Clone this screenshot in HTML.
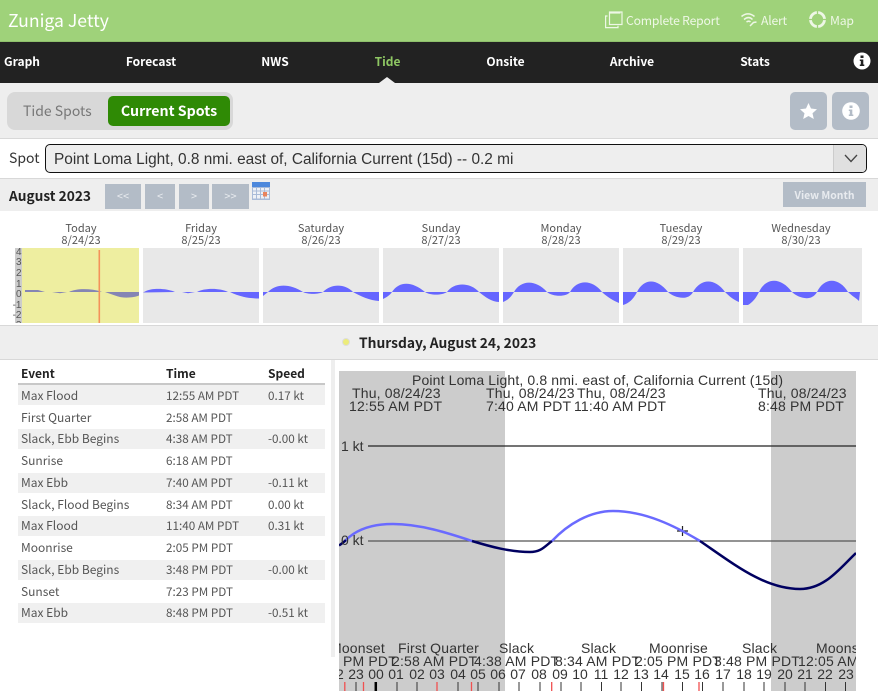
<!DOCTYPE html>
<html><head><meta charset="utf-8"><style>
html,body{margin:0;padding:0;background:#fff}
#p{position:relative;width:878px;height:693px;overflow:hidden;background:#fff;font-family:"Noto Sans CJK JP","Liberation Sans",sans-serif;color:#444}
#p div.a,#p svg{position:absolute}
.a{position:absolute;white-space:nowrap}
.n{top:52px;height:20px;line-height:20px;font-size:12px;font-weight:700;color:#fff;transform:translateX(-50%)}
.h{top:10px;height:20px;line-height:20px;font-size:12.2px;color:#eef7e6;letter-spacing:-.2px}
.b{background:#b3bcc7;color:#e8ebef;text-align:center;font-size:11px;top:184px;height:25px;line-height:25px}
.d{text-align:center;width:110px;font-size:11px;line-height:12px;color:#555;top:222px}
.t{background:#e8e8e8;top:248px;height:75px}
.r{left:18px;width:307px;height:20px}
.c{font-size:12px;line-height:22px;height:22px;color:#555}
.s{font-size:11.7px}
.th{font-size:12px;font-weight:700;line-height:20px;height:20px;color:#222;top:364px}
</style></head><body><div id="p">
<div class="a" style="left:0;top:0;width:878px;height:41px;background:#9fd27a;border-bottom:1px solid #8fc06c"></div>
<div class="a" style="left:8px;top:8px;font-size:17.6px;line-height:26px;color:#fff">Zuniga Jetty</div>
<svg style="left:604px;top:10px" width="20" height="20" viewBox="0 0 20 20" fill="none" stroke="#eef7e6" stroke-width="1.2"><rect x="5.5" y="2" width="12.5" height="12.5"/><path d="M5.5 2.6H16.5" stroke-width="2"/><path d="M3.5 6H1.6V17.6H14V15.8"/></svg>
<div class="a h" style="left:626px">Complete Report</div>
<svg style="left:740px;top:11px" width="18" height="18" viewBox="0 0 18 18" fill="none" stroke="#eef7e6" stroke-width="1.5"><path d="M1.5 5.5C5.5 2 10.5 2 14.5 5.5"/><path d="M4 8.5C7 6 10 6 12.5 8.5"/><path d="M6.5 11C8 10 9.500 10 10.500 11"/><path d="M10 15L13.500 11.500L16.500 11"/></svg>
<div class="a h" style="left:761px">Alert</div>
<svg style="left:808px;top:10px" width="19" height="19" viewBox="0 0 19 19" fill="none" stroke="#eef7e6"><circle cx="9.500" cy="9.500" r="7" stroke-width="2.800"/><path d="M9.500 1V4M9.500 15V18M1 9.500H4M15 9.500H18" stroke-width="1.300" stroke="#9fd27a"/></svg>
<div class="a h" style="left:830px">Map</div>

<div class="a" style="left:0;top:42px;width:878px;height:41px;background:#222"></div>
<div class="a n" style="left:22px">Graph</div>
<div class="a n" style="left:151px">Forecast</div>
<div class="a n" style="left:275px">NWS</div>
<div class="a n" style="left:387.500px;color:#8ec763">Tide</div>
<div class="a n" style="left:505.500px">Onsite</div>
<div class="a n" style="left:632px">Archive</div>
<div class="a n" style="left:755px">Stats</div>
<svg style="left:853px;top:52px" width="18" height="18" viewBox="0 0 18 18"><circle cx="9" cy="9" r="8.500" fill="#fff"/><path d="M7.500 3.500h3v2.500h-3zM6.800 7.500h3.500v5h1v1.500h-4.500v-1.500h1v-3.500h-1z" fill="#222"/></svg>
<svg style="left:377px;top:76px" width="20" height="7" viewBox="0 0 20 7"><path d="M2 7L10 1L18 7Z" fill="#eee"/></svg>

<div class="a" style="left:0;top:83px;width:878px;height:55px;background:#eee;border-bottom:1px solid #d8d8d8"></div>
<div class="a" style="left:7px;top:92px;width:226px;height:38px;background:#d8d8d8;border-radius:8px"></div>
<div class="a" style="left:23px;top:100px;font-size:14px;line-height:22px;color:#777">Tide Spots</div>
<div class="a" style="left:108px;top:96px;width:122px;height:30px;background:#2f8a05;border-radius:5px;color:#fff;font-weight:700;font-size:14.200px;line-height:30px;text-align:center">Current Spots</div>
<div class="a" style="left:790px;top:92px;width:37px;height:38px;background:#b3bcc7;border-radius:5px"></div>
<div class="a" style="left:832px;top:92px;width:37px;height:38px;background:#b3bcc7;border-radius:5px"></div>
<svg style="left:799px;top:102px" width="19" height="18" viewBox="0 0 19 18"><path d="M9.500 1L12 6.500L18 7.200L13.500 11.200L14.800 17L9.500 14L4.200 17L5.500 11.200L1 7.200L7 6.500Z" fill="#fff"/></svg>
<svg style="left:842px;top:102px" width="18" height="18" viewBox="0 0 18 18"><circle cx="9" cy="9" r="8.800" fill="#fff"/><path d="M7.500 3.500h3v2.500h-3zM6.800 7.500h3.500v5h1v1.500h-4.500v-1.500h1v-3.500h-1z" fill="#b3bcc7"/></svg>

<div class="a" style="left:9px;top:148px;font-size:14px;line-height:20px;color:#333">Spot</div>
<div class="a" style="left:45px;top:144px;width:820px;height:27px;background:#eee;border:1px solid #111;border-radius:5px;overflow:hidden;font-family:'Liberation Sans',sans-serif;font-size:15.400px;line-height:29px;color:#333"><span style="margin-left:8px">Point Loma Light, 0.8 nmi. east of, California Current (15d) -- 0.2 mi</span>
<div class="a" style="left:787px;top:0;width:33px;height:27px;background:#e0e0e0;border-left:1px solid #ccc"></div></div>
<svg style="left:843px;top:153px" width="16" height="11" viewBox="0 0 16 11"><path d="M2 2L8 8.500L14 2" fill="none" stroke="#444" stroke-width="1.300"/></svg>

<div class="a" style="left:0;top:178px;width:878px;height:33px;background:#eee;border-top:1px solid #d8d8d8;box-sizing:border-box"></div>
<div class="a" style="left:9px;top:185px;font-size:13.700px;font-weight:700;line-height:20px;color:#222">August 2023</div>
<div class="a b" style="left:105px;width:36px">&lt;&lt;</div>
<div class="a b" style="left:145px;width:30px">&lt;</div>
<div class="a b" style="left:179px;width:30px">&gt;</div>
<div class="a b" style="left:212px;width:37px">&gt;&gt;</div>
<svg style="left:252px;top:182px" width="18" height="18" viewBox="0 0 18 18"><rect width="18" height="18" fill="#a9bbd8"/><rect width="18" height="5" fill="#4d88dc"/><path d="M1 6h3v2.500h-3zM5 6h3v2.500h-3zM9 6h3v2.500h-3zM13 6h4v2.500h-4zM1 9.500h3v2.500h-3zM5 9.500h3v2.500h-3zM9 9.500h3v2.500h-3zM13 9.500h4v2.500h-4zM1 13h3v3.500h-3zM5 13h3v3.500h-3zM9 13h3v3.500h-3zM13 13h4v3.500h-4z" fill="#eef1f6"/><rect x="11" y="10" width="4" height="4.500" fill="#e9845e"/></svg>
<div class="a" style="left:783px;top:182px;width:83px;height:25px;background:#b3bcc7;color:#e8ebef;font-size:10.400px;font-weight:700;line-height:25px;text-align:center">View Month</div>

<div class="a d" style="left:26px">Today<br>8/24/23</div>
<div class="a d" style="left:146px">Friday<br>8/25/23</div>
<div class="a d" style="left:266px">Saturday<br>8/26/23</div>
<div class="a d" style="left:386px">Sunday<br>8/27/23</div>
<div class="a d" style="left:506px">Monday<br>8/28/23</div>
<div class="a d" style="left:626px">Tuesday<br>8/29/23</div>
<div class="a d" style="left:746px">Wednesday<br>8/30/23</div>

<div class="a" style="left:15px;top:248px;width:7px;height:75px;background:#ccc"></div>
<div class="a" style="left:22px;top:248px;width:117px;height:75px;background:#eeeea0"></div>
<div class="a t" style="left:143px;width:116px"></div>
<div class="a t" style="left:263px;width:116px"></div>
<div class="a t" style="left:383px;width:116px"></div>
<div class="a t" style="left:503px;width:116px"></div>
<div class="a t" style="left:623px;width:116px"></div>
<div class="a t" style="left:743px;width:119px"></div>
<svg style="left:0;top:0;pointer-events:none" width="878" height="323" viewBox="0 0 878 323">
<g font-family="Liberation Sans" font-size="10" fill="#555" text-anchor="end"><text x="21.500" y="255">4</text><text x="21.500" y="265">3</text><text x="21.500" y="276">2</text><text x="21.500" y="287">1</text><text x="21.500" y="297">0</text><text x="21.500" y="308">-1</text><text x="21.500" y="318">-2</text><text x="21.500" y="328">-3</text></g>
<g fill="#8585b4">
<path d="M25 292V290H38L45 292Z"/><path d="M52 292H67L60 293.200Z"/><path d="M69 292C76 288.500 90 288 102 292Z"/><path d="M105 292H139V295.500C133 298 122 298.500 115 295.500Z"/>
</g>
<rect x="98.500" y="250" width="1.600" height="73" fill="#f4925a"/>
<g fill="#6666ff">
<path d="M143 292.500L146 291C152 288 166 288 175 292Z"/><path d="M182 292H195L188 293.300Z"/><path d="M197 292C204 287.800 220 287.800 228 292Z"/><path d="M230 292H259V298.500C250 298.500 240 297 230 292Z"/>
<path d="M263 292V296L268 292ZM268 292C276 283.500 290 283.500 303 292Z"/><path d="M303 292C308 294.500 318 294.500 323 292Z"/><path d="M323 292C331 283.500 345 283.500 353 292Z"/><path d="M353 292C360 296 370 300.500 379 301V292Z"/>
<path d="M383 292V299C387 297 390 295 392 292ZM392 292C399 281 412 281 425 292Z"/><path d="M425 292C430 295.500 442 295.500 447 292Z"/><path d="M447 292C454 282 470 282 479 292Z"/><path d="M479 292C485 297 492 302 499 302V292Z"/>
<path d="M503 292V302C508 300 511 297 514 292ZM514 292C521 279.500 536 279.500 547 292Z"/><path d="M547 292C552 296.500 566 297.500 570 292Z"/><path d="M570 292C577 279.500 592 279 602 292Z"/><path d="M602 292C607 297 614 301 619 303V292Z"/>
<path d="M623 292V305C630 303 634 298 637 292ZM637 292C644 278 657 278 668 292Z"/><path d="M668 292C673 297 688 302 693 292Z"/><path d="M693 292C701 278 715 278 725 292Z"/><path d="M725 292C730 297 734 300 739 302V292Z"/>
<path d="M743 292V305H748C753 302 756 298 759 292ZM759 292C766 277 781 277 792 292Z"/><path d="M792 292C797 297 811 303 817 292Z"/><path d="M817 292C824 277 839 277 848 292Z"/><path d="M848 292C852 296 856 298 859 301L860 292Z"/>
</g></svg>

<div class="a" style="left:0;top:325px;width:878px;height:35px;background:#eee;border-top:1px solid #d8d8d8;border-bottom:1px solid #d8d8d8;box-sizing:border-box"></div>
<div class="a" style="left:342px;top:338px;width:8px;height:8px;border-radius:50%;background:#ecec7a;border:1px solid #ddd;box-sizing:border-box"></div>
<div class="a" style="left:359px;top:332px;font-size:13.800px;font-weight:700;line-height:21px;color:#222">Thursday, August 24, 2023</div>

<div class="a th" style="left:21px">Event</div><div class="a th" style="left:166px">Time</div><div class="a th" style="left:268px">Speed</div>
<div class="a" style="left:18px;top:383px;width:307px;height:2px;background:#c8c8c8"></div>
<div class="a r" style="top:385px;background:#f0f0f0"></div>
<div class="a r" style="top:429px;background:#f0f0f0"></div>
<div class="a r" style="top:473px;background:#f0f0f0"></div>
<div class="a r" style="top:516px;background:#f0f0f0"></div>
<div class="a r" style="top:560px;background:#f0f0f0"></div>
<div class="a r" style="top:603px;background:#f0f0f0"></div>
<div class="a c" style="left:21px;top:385px">Max Flood</div><div class="a c s" style="left:166px;top:385px">12:55 AM PDT</div><div class="a c s" style="left:268px;top:385px">0.17 kt</div>
<div class="a c" style="left:21px;top:407px">First Quarter</div><div class="a c s" style="left:166px;top:407px">2:58 AM PDT</div>
<div class="a c" style="left:21px;top:428px">Slack, Ebb Begins</div><div class="a c s" style="left:166px;top:428px">4:38 AM PDT</div><div class="a c s" style="left:268px;top:428px">-0.00 kt</div>
<div class="a c" style="left:21px;top:450px">Sunrise</div><div class="a c s" style="left:166px;top:450px">6:18 AM PDT</div>
<div class="a c" style="left:21px;top:472px">Max Ebb</div><div class="a c s" style="left:166px;top:472px">7:40 AM PDT</div><div class="a c s" style="left:268px;top:472px">-0.11 kt</div>
<div class="a c" style="left:21px;top:494px">Slack, Flood Begins</div><div class="a c s" style="left:166px;top:494px">8:34 AM PDT</div><div class="a c s" style="left:268px;top:494px">0.00 kt</div>
<div class="a c" style="left:21px;top:515px">Max Flood</div><div class="a c s" style="left:166px;top:515px">11:40 AM PDT</div><div class="a c s" style="left:268px;top:515px">0.31 kt</div>
<div class="a c" style="left:21px;top:537px">Moonrise</div><div class="a c s" style="left:166px;top:537px">2:05 PM PDT</div>
<div class="a c" style="left:21px;top:559px">Slack, Ebb Begins</div><div class="a c s" style="left:166px;top:559px">3:48 PM PDT</div><div class="a c s" style="left:268px;top:559px">-0.00 kt</div>
<div class="a c" style="left:21px;top:581px">Sunset</div><div class="a c s" style="left:166px;top:581px">7:23 PM PDT</div>
<div class="a c" style="left:21px;top:602px">Max Ebb</div><div class="a c s" style="left:166px;top:602px">8:48 PM PDT</div><div class="a c s" style="left:268px;top:602px">-0.51 kt</div>
<div class="a" style="left:331px;top:360px;width:4px;height:297px;background:#eee"></div>

<svg style="left:339px;top:371px" width="517" height="320" viewBox="339 371 517 320">
<rect x="339" y="371" width="166" height="320" fill="#ccc"/><rect x="771" y="371" width="85" height="320" fill="#ccc"/>
<g stroke="#222" stroke-width="1.200" fill="none"><path d="M368 446H856"/><path d="M368 541H856" stroke="#555"/><path d="M677 531H688M682.500 526V536"/></g>
<path d="M339 545.500C342 543.500 344 542 346 540" fill="none" stroke="#000060" stroke-width="2.500"/>
<path d="M346 540C358 528 376 524 393 524C420 524 448 533 472 541" fill="none" stroke="#6a6aff" stroke-width="2.500"/>
<path d="M472 541C490 546.500 510 552 530 552C541 552 544 547 552 541" fill="none" stroke="#000060" stroke-width="2.500"/>
<path d="M552 541C568 524 590 511 613 511C645 511 675 526 700 541" fill="none" stroke="#6a6aff" stroke-width="2.500"/>
<path d="M700 541C735 565 765 589 800 589C825 589 840 568 856 553" fill="none" stroke="#000060" stroke-width="2.500"/>
<g font-family="Liberation Sans" font-size="14" fill="#333">
<text x="412" y="385" textLength="371">Point Loma Light, 0.8 nmi. east of, California Current (15d)</text>
<g letter-spacing=".18">
<text x="352" y="398">Thu, 08/24/23</text><text x="349" y="411">12:55 AM PDT</text>
<text x="486" y="398">Thu, 08/24/23</text><text x="486" y="411">7:40 AM PDT</text>
<text x="577" y="398">Thu, 08/24/23</text><text x="574" y="411">11:40 AM PDT</text>
<text x="758" y="398">Thu, 08/24/23</text><text x="758" y="411">8:48 PM PDT</text>
<text x="330" y="653">Moonset</text><text x="398" y="653">First Quarter</text><text x="499" y="653">Slack</text><text x="581" y="653">Slack</text><text x="649" y="653">Moonrise</text><text x="742" y="653">Slack</text><text x="816" y="653">Moonset</text>
<text x="304" y="666">11:05 PM PDT</text><text x="392" y="666">2:58 AM PDT</text><text x="474" y="666">4:38 AM PDT</text><text x="555" y="666">8:34 AM PDT</text><text x="635" y="666">2:05 PM PDT</text><text x="714" y="666">3:48 PM PDT</text><text x="798" y="666">12:05 AM PDT</text>
</g>
<text x="341" y="451">1 kt</text><text x="341" y="545">0 kt</text>
<g text-anchor="middle"><text x="336" y="679">22</text><text x="356" y="679">23</text><text x="376" y="679">00</text><text x="396" y="679">01</text><text x="417" y="679">02</text><text x="437" y="679">03</text><text x="458" y="679">04</text><text x="478" y="679">05</text><text x="498" y="679">06</text><text x="518" y="679">07</text><text x="539" y="679">08</text><text x="560" y="679">09</text><text x="580" y="679">10</text><text x="601" y="679">11</text><text x="621" y="679">12</text><text x="641" y="679">13</text><text x="661" y="679">14</text><text x="682" y="679">15</text><text x="702" y="679">16</text><text x="723" y="679">17</text><text x="744" y="679">18</text><text x="764" y="679">19</text><text x="785" y="679">20</text><text x="805" y="679">21</text><text x="825" y="679">22</text><text x="846" y="679">23</text></g>
</g>
<path d="M356 682V691M397 682V691M417 682V691M458 682V691M478 682V691M499 682V691M519 682V691M540 682V691M561 682V691M581 682V691M601.500 682V691M621 682V691M641.500 682V691M662 682V691M682.500 682V691M702.500 682V691M723 682V691M744 682V691M764 682V691M785 682V691M805 682V691M825.500 682V691M845.500 682V691" stroke="#333" stroke-width="1"/>
<path d="M375.800 682V691" stroke="#000" stroke-width="2.500"/>
<path d="M344.800 682V691M363.500 682V691M437 682V691M471.500 682V691M551.700 682V691M663.500 682V691M699 682V691" stroke="#f05050" stroke-width="1.300"/>
</svg>
</div></body></html>
